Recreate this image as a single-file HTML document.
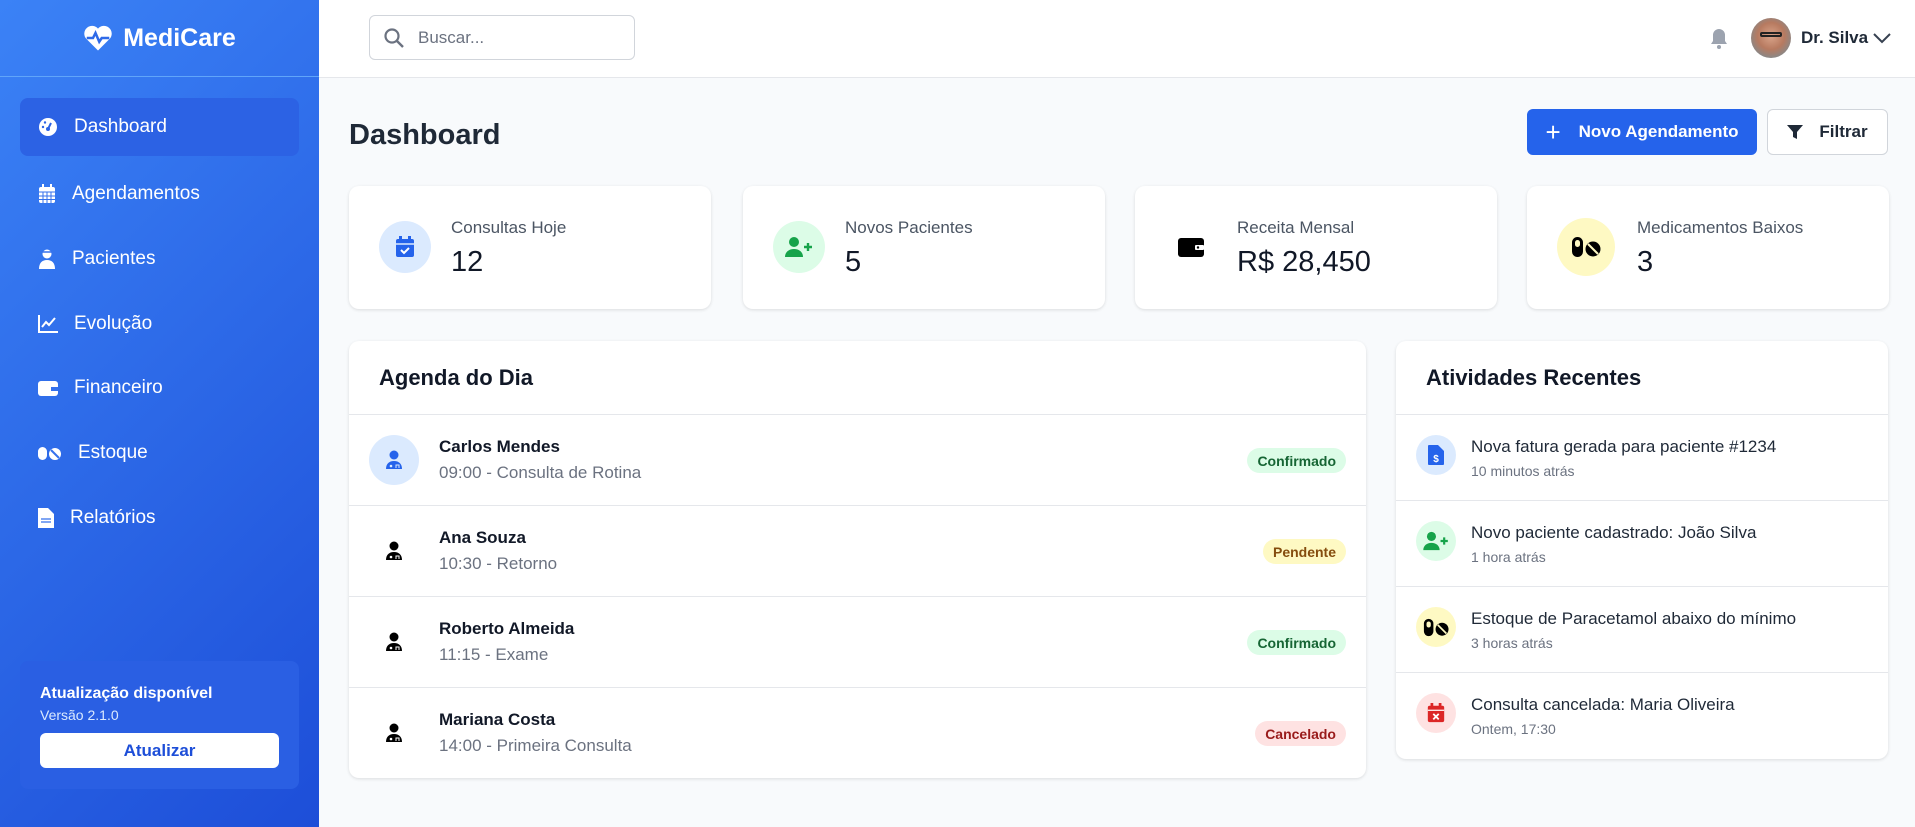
<!DOCTYPE html><html><head><meta charset="utf-8"><style>
*{box-sizing:border-box;margin:0;padding:0}
body{width:1915px;height:827px;overflow:hidden;font-family:"Liberation Sans",sans-serif;background:#f8fafc;position:relative;color:#111827}
.sb{position:absolute;left:0;top:0;width:319px;height:827px;background:linear-gradient(135deg,#3b82f6,#1d4ed8)}
.logo{height:77px;border-bottom:1px solid #60a5fa;display:flex;align-items:center;justify-content:center;color:#fff;font-weight:bold;font-size:25px;gap:10px}
.nav{position:absolute;left:20px;width:279px;height:58px;display:flex;align-items:center;padding-left:18px;color:#fff;font-size:19px;gap:16px}
.nav.act{background:#2c62e4;border-radius:8px}
.upd{position:absolute;left:20px;top:661px;width:279px;height:128px;background:#2a5fe3;border-radius:8px;padding:24px 20px;color:#fff}
.upd b{font-size:16px;display:block}
.upd small{font-size:14px;color:#dbeafe;display:block;margin-top:4px}
.upd div{margin-top:10px;background:#fff;color:#1d4ed8;border-radius:6px;height:35px;display:flex;align-items:center;justify-content:center;font-weight:bold;font-size:17px}
.hd{position:absolute;left:319px;top:0;right:0;height:78px;background:#fff;border-bottom:1px solid #e5e7eb}
.search{position:absolute;left:50px;top:15px;width:266px;height:45px;border:1px solid #d1d5db;border-radius:6px;display:flex;align-items:center;padding-left:14px;gap:14px;color:#6b7280;font-size:17px}
.card{position:absolute;background:#fff;border-radius:10px;box-shadow:0 1px 3px rgba(0,0,0,.12)}
.stat{top:186px;height:123px;width:362px}
.ic{position:absolute;left:30px;top:35px;width:52px;height:52px;border-radius:50%;display:flex;align-items:center;justify-content:center}
.lbl{position:absolute;left:102px;top:32px;font-size:17px;color:#4b5563}
.val{position:absolute;left:102px;top:60px;font-size:29px;color:#111827}
.ph{height:74px;border-bottom:1px solid #e5e7eb;padding:24px 30px;font-size:22px;font-weight:bold;color:#111827}
.row{height:91px;border-bottom:1px solid #e5e7eb;position:relative}
.row:last-child{border-bottom:none}
.av{position:absolute;left:20px;top:20px;width:50px;height:50px;border-radius:50%;display:flex;align-items:center;justify-content:center}
.nm{position:absolute;left:90px;top:22px;font-size:17px;font-weight:bold}
.sub{position:absolute;left:90px;top:48px;font-size:17px;color:#6b7280}
.bd{position:absolute;right:20px;top:33px;height:25px;padding:0 10px;border-radius:13px;font-size:14px;font-weight:bold;display:flex;align-items:center}
.arow{height:86px;border-bottom:1px solid #e5e7eb;position:relative}
.arow:last-child{border-bottom:none}
.aic{position:absolute;left:20px;top:20px;width:40px;height:40px;border-radius:50%;display:flex;align-items:center;justify-content:center}
.at{position:absolute;left:75px;top:22px;font-size:17px;color:#1f2937}
.as{position:absolute;left:75px;top:48px;font-size:14px;color:#6b7280}
</style></head><body>
<div class="sb">
<div class="logo"><svg width="30" height="28" viewBox="0 0 24 22"><path d="M12 21 2.5 11.5A5.5 5.5 0 0 1 12 3.5a5.5 5.5 0 0 1 9.5 8Z" fill="#fff"/><path d="M3 11h5l2-4 3 7 2-3h6" stroke="#2f6ae8" stroke-width="2" fill="none"/></svg>MediCare</div>
<div class="nav act" style="top:98px"><svg width="20" height="20" viewBox="0 0 20 20"><circle cx="10" cy="10" r="9" fill="#fff"/><circle cx="10" cy="12" r="2" fill="#2c62e4"/><path d="M10 12 13 6" stroke="#2c62e4" stroke-width="2"/><circle cx="5" cy="10" r="1.2" fill="#2c62e4"/><circle cx="7" cy="5.5" r="1.2" fill="#2c62e4"/></svg>Dashboard</div>
<div class="nav" style="top:165px"><svg width="18" height="20" viewBox="0 0 18 20"><rect x="1" y="3" width="16" height="16" rx="2" fill="#fff"/><rect x="4" y="0" width="2" height="5" fill="#fff"/><rect x="12" y="0" width="2" height="5" fill="#fff"/><path d="M1 8h16M5 8v11M9 8v11M13 8v11M1 12h16M1 15.5h16" stroke="#3571ec" stroke-width="1"/></svg>Agendamentos</div>
<div class="nav" style="top:230px"><svg width="18" height="22" viewBox="0 0 18 22"><circle cx="9" cy="6" r="4.5" fill="#fff"/><path d="M1 21c0-6 3-9 8-9s8 3 8 9Z" fill="#fff"/><path d="M4 4h10" stroke="#3571ec" stroke-width="1.5"/></svg>Pacientes</div>
<div class="nav" style="top:295px"><svg width="20" height="18" viewBox="0 0 20 18"><path d="M1 0v17h19" stroke="#fff" stroke-width="2" fill="none"/><path d="M4 12l4-5 3 3 6-7" stroke="#fff" stroke-width="2" fill="none"/></svg>Evolução</div>
<div class="nav" style="top:359px"><svg width="20" height="18" viewBox="0 0 20 18"><rect x="0" y="2" width="20" height="15" rx="3" fill="#fff"/><rect x="13" y="8" width="7" height="4" fill="#3571ec"/></svg>Financeiro</div>
<div class="nav" style="top:424px"><svg width="24" height="16" viewBox="0 0 24 16"><rect x="0" y="2" width="9" height="13" rx="4.5" fill="#fff"/><circle cx="17" cy="9" r="6" fill="#fff"/><path d="M13 5l8 8" stroke="#3571ec" stroke-width="2"/></svg>Estoque</div>
<div class="nav" style="top:489px"><svg width="16" height="20" viewBox="0 0 16 20"><path d="M0 0h10l6 6v14H0Z" fill="#fff"/><path d="M3 11h10M3 14h10" stroke="#3571ec" stroke-width="1.3"/></svg>Relatórios</div>
<div class="upd"><b>Atualização disponível</b><small>Versão 2.1.0</small><div>Atualizar</div></div>
</div>
<div class="hd">
<div class="search"><svg width="20" height="20" viewBox="0 0 20 20"><circle cx="8" cy="8" r="6.5" stroke="#6b7280" stroke-width="2.2" fill="none"/><path d="M13 13l6 6" stroke="#6b7280" stroke-width="2.4"/></svg>Buscar...</div>
<svg style="position:absolute;left:1390px;top:28px" width="20" height="22" viewBox="0 0 20 22"><path d="M10 1a6 6 0 0 0-6 6v6l-2 3h16l-2-3V7a6 6 0 0 0-6-6Z" fill="#9ca3af"/><circle cx="10" cy="19" r="2" fill="#9ca3af"/></svg>
<div style="position:absolute;left:1432px;top:18px;width:40px;height:40px;border-radius:50%;background:radial-gradient(circle at 50% 45%,#d9a48a 0,#b77a60 45%,#888 75%);overflow:hidden"><div style="position:absolute;left:9px;top:14px;width:22px;height:5px;border:2px solid #222;border-radius:2px"></div></div>
<div style="position:absolute;left:1482px;top:28px;font-size:17px;font-weight:bold;color:#1f2937">Dr. Silva</div>
<svg style="position:absolute;left:1554px;top:32px" width="18" height="12" viewBox="0 0 18 12"><path d="M1 2l8 8 8-8" stroke="#374151" stroke-width="2" fill="none"/></svg>
</div>
<div style="position:absolute;left:349px;top:119px;font-size:29px;font-weight:bold;color:#1f2937">Dashboard</div>
<div style="position:absolute;left:1527px;top:109px;width:230px;height:46px;background:#2563eb;border-radius:6px;color:#fff;font-size:17px;font-weight:bold;display:flex;align-items:center;justify-content:center;gap:18px"><span style="font-size:26px;font-weight:normal">+</span>Novo Agendamento</div>
<div style="position:absolute;left:1767px;top:109px;width:121px;height:46px;background:#fff;border:1px solid #d1d5db;border-radius:6px;color:#1f2937;font-size:17px;font-weight:bold;display:flex;align-items:center;justify-content:center;gap:16px"><svg width="16" height="16" viewBox="0 0 16 16"><path d="M0 1h16L10 8v7l-4-2V8Z" fill="#1f2937"/></svg>Filtrar</div>

<div class="card stat" style="left:349px"><div class="ic" style="background:#dbeafe"><svg width="18" height="22" viewBox="0 0 18 22"><rect x="0" y="3" width="18" height="18" rx="2" fill="#2563eb"/><rect x="3" y="0" width="3" height="5" fill="#2563eb"/><rect x="12" y="0" width="3" height="5" fill="#2563eb"/><path d="M0 8h18" stroke="#dbeafe" stroke-width="1.5"/><path d="M5 14l3 3 5-5" stroke="#fff" stroke-width="2" fill="none"/></svg></div><div class="lbl">Consultas Hoje</div><div class="val">12</div></div>
<div class="card stat" style="left:743px"><div class="ic" style="background:#dcfce7"><svg width="28" height="22" viewBox="0 0 28 22"><circle cx="9" cy="6" r="5" fill="#16a34a"/><path d="M0 21c0-5 4-8 9-8s9 3 9 8Z" fill="#16a34a"/><path d="M23 7v8M19 11h8" stroke="#16a34a" stroke-width="2.4"/></svg></div><div class="lbl">Novos Pacientes</div><div class="val">5</div></div>
<div class="card stat" style="left:1135px"><div class="ic"><svg width="26" height="22" viewBox="0 0 26 22"><rect x="0" y="2" width="26" height="19" rx="3" fill="#000"/><rect x="17" y="9" width="9" height="5" rx="1" fill="#fff"/><circle cx="20" cy="11.5" r="1.2" fill="#000"/></svg></div><div class="lbl">Receita Mensal</div><div class="val">R$ 28,450</div></div>
<div class="card stat" style="left:1527px"><div class="ic" style="background:#fef9c3;width:58px;height:58px;top:32px"><svg width="30" height="22" viewBox="0 0 30 22"><rect x="1" y="1" width="11" height="20" rx="5.5" fill="#000"/><rect x="4" y="4" width="5" height="7" rx="2.5" fill="#fef9c3"/><circle cx="22" cy="13" r="7.5" fill="#000"/><path d="M17 8l10 10" stroke="#fef9c3" stroke-width="2"/></svg></div><div class="lbl" style="left:110px">Medicamentos Baixos</div><div class="val" style="left:110px">3</div></div>

<div class="card" style="left:349px;top:341px;width:1017px;height:437px">
<div class="ph">Agenda do Dia</div>
<div class="row"><div class="av" style="background:#dbeafe"><svg width="18" height="20" viewBox="0 0 18 20"><circle cx="9" cy="5" r="4.5" fill="#2563eb"/><path d="M1 19c0-5 3-8 8-8s8 3 8 8Z" fill="#2563eb"/><circle cx="6" cy="16" r="1.3" fill="#dbeafe"/><path d="M11 18v-3h3v3" stroke="#dbeafe" stroke-width="1" fill="none"/></svg></div><div class="nm">Carlos Mendes</div><div class="sub">09:00 - Consulta de Rotina</div><div class="bd" style="background:#dcfce7;color:#166534">Confirmado</div></div>
<div class="row"><div class="av"><svg width="18" height="20" viewBox="0 0 18 20"><circle cx="9" cy="5" r="4.5" fill="#000"/><path d="M1 19c0-5 3-8 8-8s8 3 8 8Z" fill="#000"/><circle cx="6" cy="16" r="1.3" fill="#fff"/><path d="M11 18v-3h3v3" stroke="#fff" stroke-width="1" fill="none"/></svg></div><div class="nm">Ana Souza</div><div class="sub">10:30 - Retorno</div><div class="bd" style="background:#fef9c3;color:#854d0e">Pendente</div></div>
<div class="row"><div class="av"><svg width="18" height="20" viewBox="0 0 18 20"><circle cx="9" cy="5" r="4.5" fill="#000"/><path d="M1 19c0-5 3-8 8-8s8 3 8 8Z" fill="#000"/><circle cx="6" cy="16" r="1.3" fill="#fff"/><path d="M11 18v-3h3v3" stroke="#fff" stroke-width="1" fill="none"/></svg></div><div class="nm">Roberto Almeida</div><div class="sub">11:15 - Exame</div><div class="bd" style="background:#dcfce7;color:#166534">Confirmado</div></div>
<div class="row"><div class="av"><svg width="18" height="20" viewBox="0 0 18 20"><circle cx="9" cy="5" r="4.5" fill="#000"/><path d="M1 19c0-5 3-8 8-8s8 3 8 8Z" fill="#000"/><circle cx="6" cy="16" r="1.3" fill="#fff"/><path d="M11 18v-3h3v3" stroke="#fff" stroke-width="1" fill="none"/></svg></div><div class="nm">Mariana Costa</div><div class="sub">14:00 - Primeira Consulta</div><div class="bd" style="background:#fee2e2;color:#991b1b">Cancelado</div></div>
</div>

<div class="card" style="left:1396px;top:341px;width:492px;height:418px">
<div class="ph">Atividades Recentes</div>
<div class="arow"><div class="aic" style="background:#dbeafe"><svg width="16" height="20" viewBox="0 0 16 20"><path d="M0 1a1 1 0 0 1 1-1h9l6 6v13a1 1 0 0 1-1 1H1a1 1 0 0 1-1-1Z" fill="#2563eb"/><text x="8" y="17" font-size="10" font-weight="bold" fill="#fff" text-anchor="middle" font-family="Liberation Sans">$</text></svg></div><div class="at">Nova fatura gerada para paciente #1234</div><div class="as">10 minutos atrás</div></div>
<div class="arow"><div class="aic" style="background:#dcfce7"><svg width="26" height="20" viewBox="0 0 28 22"><circle cx="9" cy="6" r="5" fill="#16a34a"/><path d="M0 21c0-5 4-8 9-8s9 3 9 8Z" fill="#16a34a"/><path d="M23 7v8M19 11h8" stroke="#16a34a" stroke-width="2.4"/></svg></div><div class="at">Novo paciente cadastrado: João Silva</div><div class="as">1 hora atrás</div></div>
<div class="arow"><div class="aic" style="background:#fef9c3"><svg width="26" height="19" viewBox="0 0 30 22"><rect x="1" y="1" width="11" height="20" rx="5.5" fill="#000"/><rect x="4" y="4" width="5" height="7" rx="2.5" fill="#fef9c3"/><circle cx="22" cy="13" r="7.5" fill="#000"/><path d="M17 8l10 10" stroke="#fef9c3" stroke-width="2"/></svg></div><div class="at">Estoque de Paracetamol abaixo do mínimo</div><div class="as">3 horas atrás</div></div>
<div class="arow"><div class="aic" style="background:#fee2e2"><svg width="18" height="20" viewBox="0 0 18 22"><rect x="0" y="3" width="18" height="18" rx="2" fill="#dc2626"/><rect x="3" y="0" width="3" height="5" fill="#dc2626"/><rect x="12" y="0" width="3" height="5" fill="#dc2626"/><path d="M0 8h18" stroke="#fee2e2" stroke-width="1.5"/><path d="M6 12l6 6M12 12l-6 6" stroke="#fff" stroke-width="2"/></svg></div><div class="at">Consulta cancelada: Maria Oliveira</div><div class="as">Ontem, 17:30</div></div>
</div>
</body></html>
